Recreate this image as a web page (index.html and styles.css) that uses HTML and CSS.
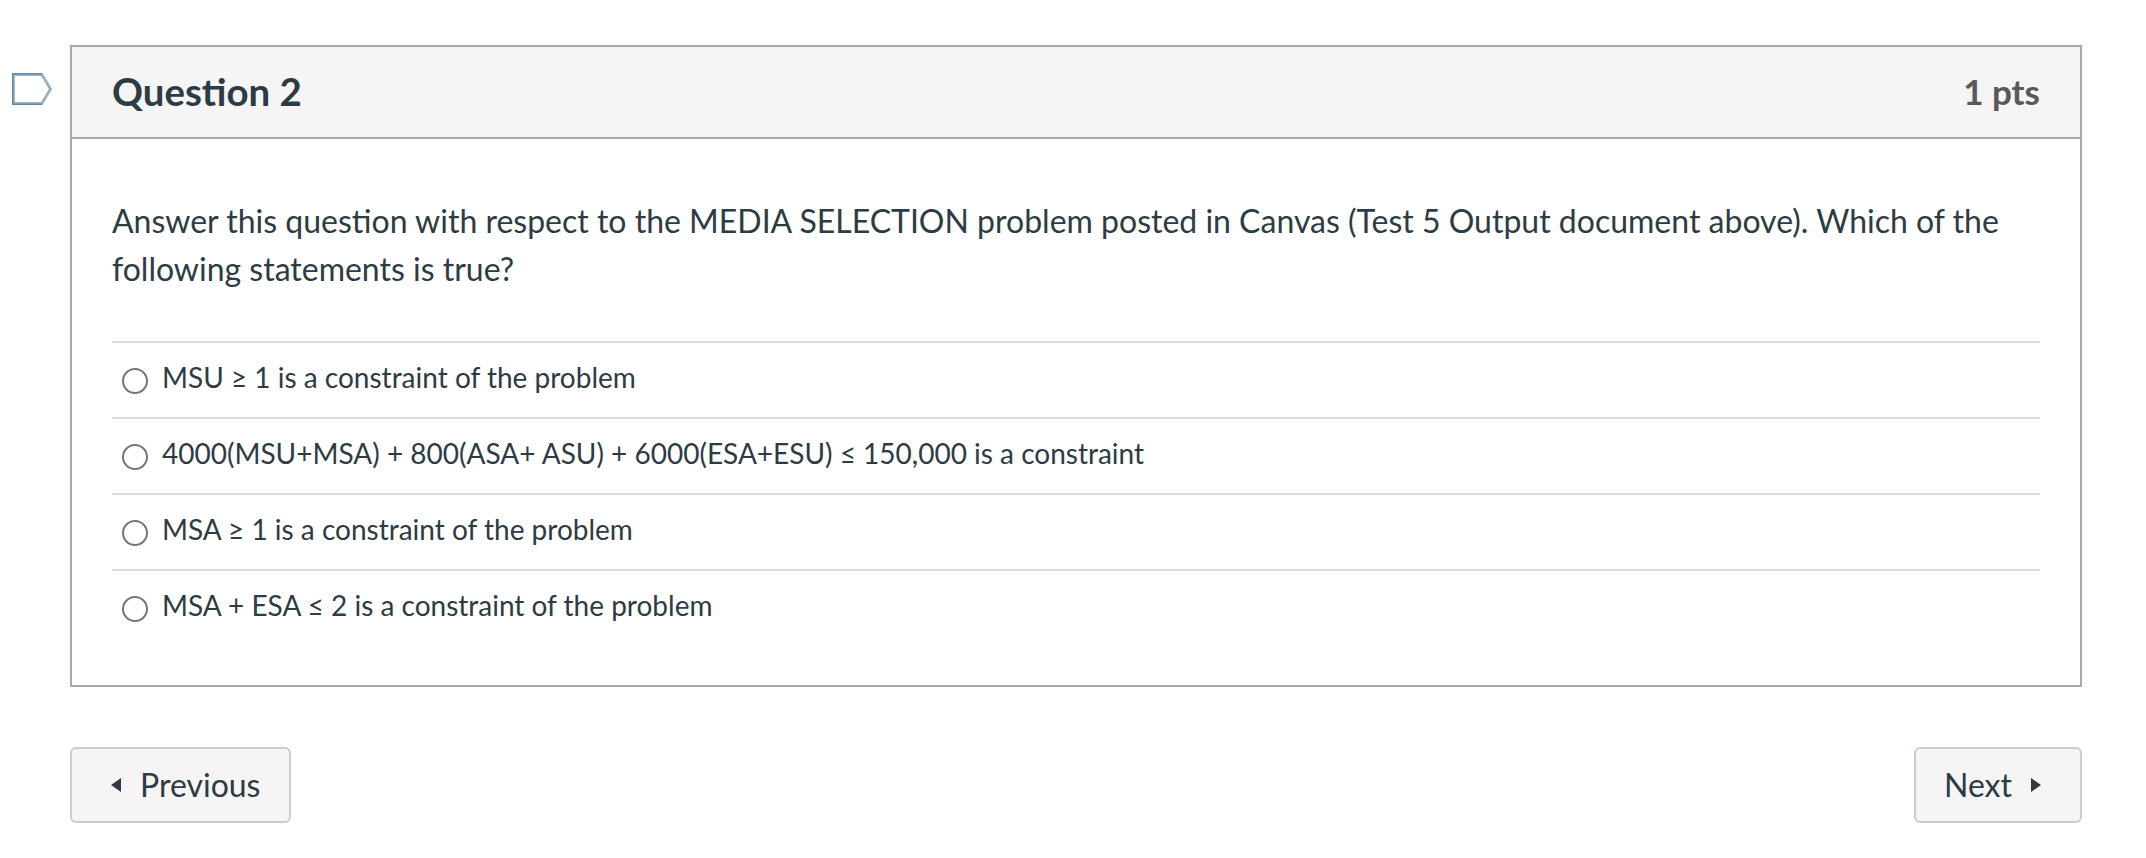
FILE: index.html
```html
<!DOCTYPE html>
<html lang="en">
<head>
  <meta charset="UTF-8" />
  <meta name="viewport" content="width=device-width, initial-scale=1.0"/>
  <title>Question 2</title>
  <link rel="stylesheet" href="styles.css">
</head>
<body>
  <main class="quiz">
    <button class="flag" aria-label="Flag question">
      <svg width="40" height="32" viewBox="0 0 40 32" fill="none">
        <path d="M1.5 1.5H29.8L38.5 16L29.8 30.5H1.5Z" stroke="#9bb2c3" stroke-width="2.8"/>
        <path d="M30 31.3H.7V.7H30" stroke="#6488a3" stroke-width="1.4"/>
      </svg>
    </button>

    <div class="content">
      <section class="question">
        <header class="question-header">
          <h2>Question 2</h2>
          <span class="points">1 pts</span>
        </header>
        <div class="question-body">
          <p class="question-text">Answer this question with respect to the MEDIA SELECTION problem posted in Canvas (Test 5 Output document above). Which of the following statements is true?</p>
          <div class="answers">
            <label class="answer">
              <input type="radio" name="question2" />
              <span>MSU ≥ 1 is a constraint of the problem</span>
            </label>
            <label class="answer">
              <input type="radio" name="question2" />
              <span>4000(MSU+MSA) + 800(ASA+ ASU) + 6000(ESA+ESU) ≤ 150,000 is a constraint</span>
            </label>
            <label class="answer">
              <input type="radio" name="question2" />
              <span>MSA ≥ 1 is a constraint of the problem</span>
            </label>
            <label class="answer">
              <input type="radio" name="question2" />
              <span>MSA + ESA ≤ 2 is a constraint of the problem</span>
            </label>
          </div>
        </div>
      </section>

      <nav class="buttons">
        <button class="btn btn-previous">
          <svg width="10" height="14" viewBox="0 0 10 14"><path d="M10 0V14L0 7Z" fill="currentColor"/></svg>
          <span>Previous</span>
        </button>
        <button class="btn btn-next">
          <span>Next</span>
          <svg width="10" height="14" viewBox="0 0 10 14"><path d="M0 0V14L10 7Z" fill="currentColor"/></svg>
        </button>
      </nav>
    </div>
  </main>
</body>
</html>
```

FILE: styles.css
```css
* {
  box-sizing: border-box;
}

body {
  font-family: Lato, "Liberation Sans", sans-serif;
  font-size: 32px;
  line-height: 48px;
  color: #2d3b45;
  margin: 0;
  background: #fff;
}

.quiz {
  display: flex;
  align-items: flex-start;
  padding: 45px 64px 0 12px;
}

.flag {
  width: 40px;
  height: 32px;
  margin: 28px 18px 0 0;
  padding: 0;
  border: none;
  background: none;
  cursor: pointer;
}

.flag svg, .btn svg {
  display: block;
}

.content {
  flex: 1;
}

.question {
  height: 642px;
  border: 2px solid #aaa;
}

.question-header {
  display: flex;
  justify-content: space-between;
  align-items: center;
  height: 92px;
  padding: 0 40px 2px;
  background: #f5f5f5;
  border-bottom: 2px solid #aaa;
}

h2 {
  margin: 0;
  font-size: 38.4px;
  font-weight: bold;
}

.points {
  font-size: 35px;
  font-weight: bold;
  color: #595959;
}

.question-body {
  padding: 58px 40px 0;
}

.question-text {
  margin: 0 0 48px;
}

.answer {
  display: flex;
  align-items: flex-start;
  height: 76px;
  padding: 10px 10px 0;
  border-top: 2px solid #ddd;
  font-size: 28px;
  cursor: pointer;
}

.answer input {
  appearance: none;
  width: 26px;
  height: 26px;
  margin: 15px 14px 0 0;
  border: 2px solid #767676;
  border-radius: 50%;
  background: #fff;
}

.answer input:checked {
  background: #2d3b45;
  box-shadow: inset 0 0 0 4px #fff;
}

.buttons {
  display: flex;
  justify-content: space-between;
  margin-top: 60px;
}

.btn {
  display: flex;
  align-items: center;
  height: 76px;
  padding: 0;
  border: 2px solid #c7cdd1;
  border-radius: 6px;
  background: #f5f5f5;
  color: #2d3b45;
  font-family: inherit;
  font-size: 32px;
  cursor: pointer;
}

.btn span {
  padding-bottom: 2px;
}

.btn:hover {
  background: #e8eaec;
}

.btn-previous {
  width: 221px;
  padding-left: 39px;
  gap: 19px;
}

.btn-next {
  width: 168px;
  padding-left: 28px;
  gap: 19px;
}
```
